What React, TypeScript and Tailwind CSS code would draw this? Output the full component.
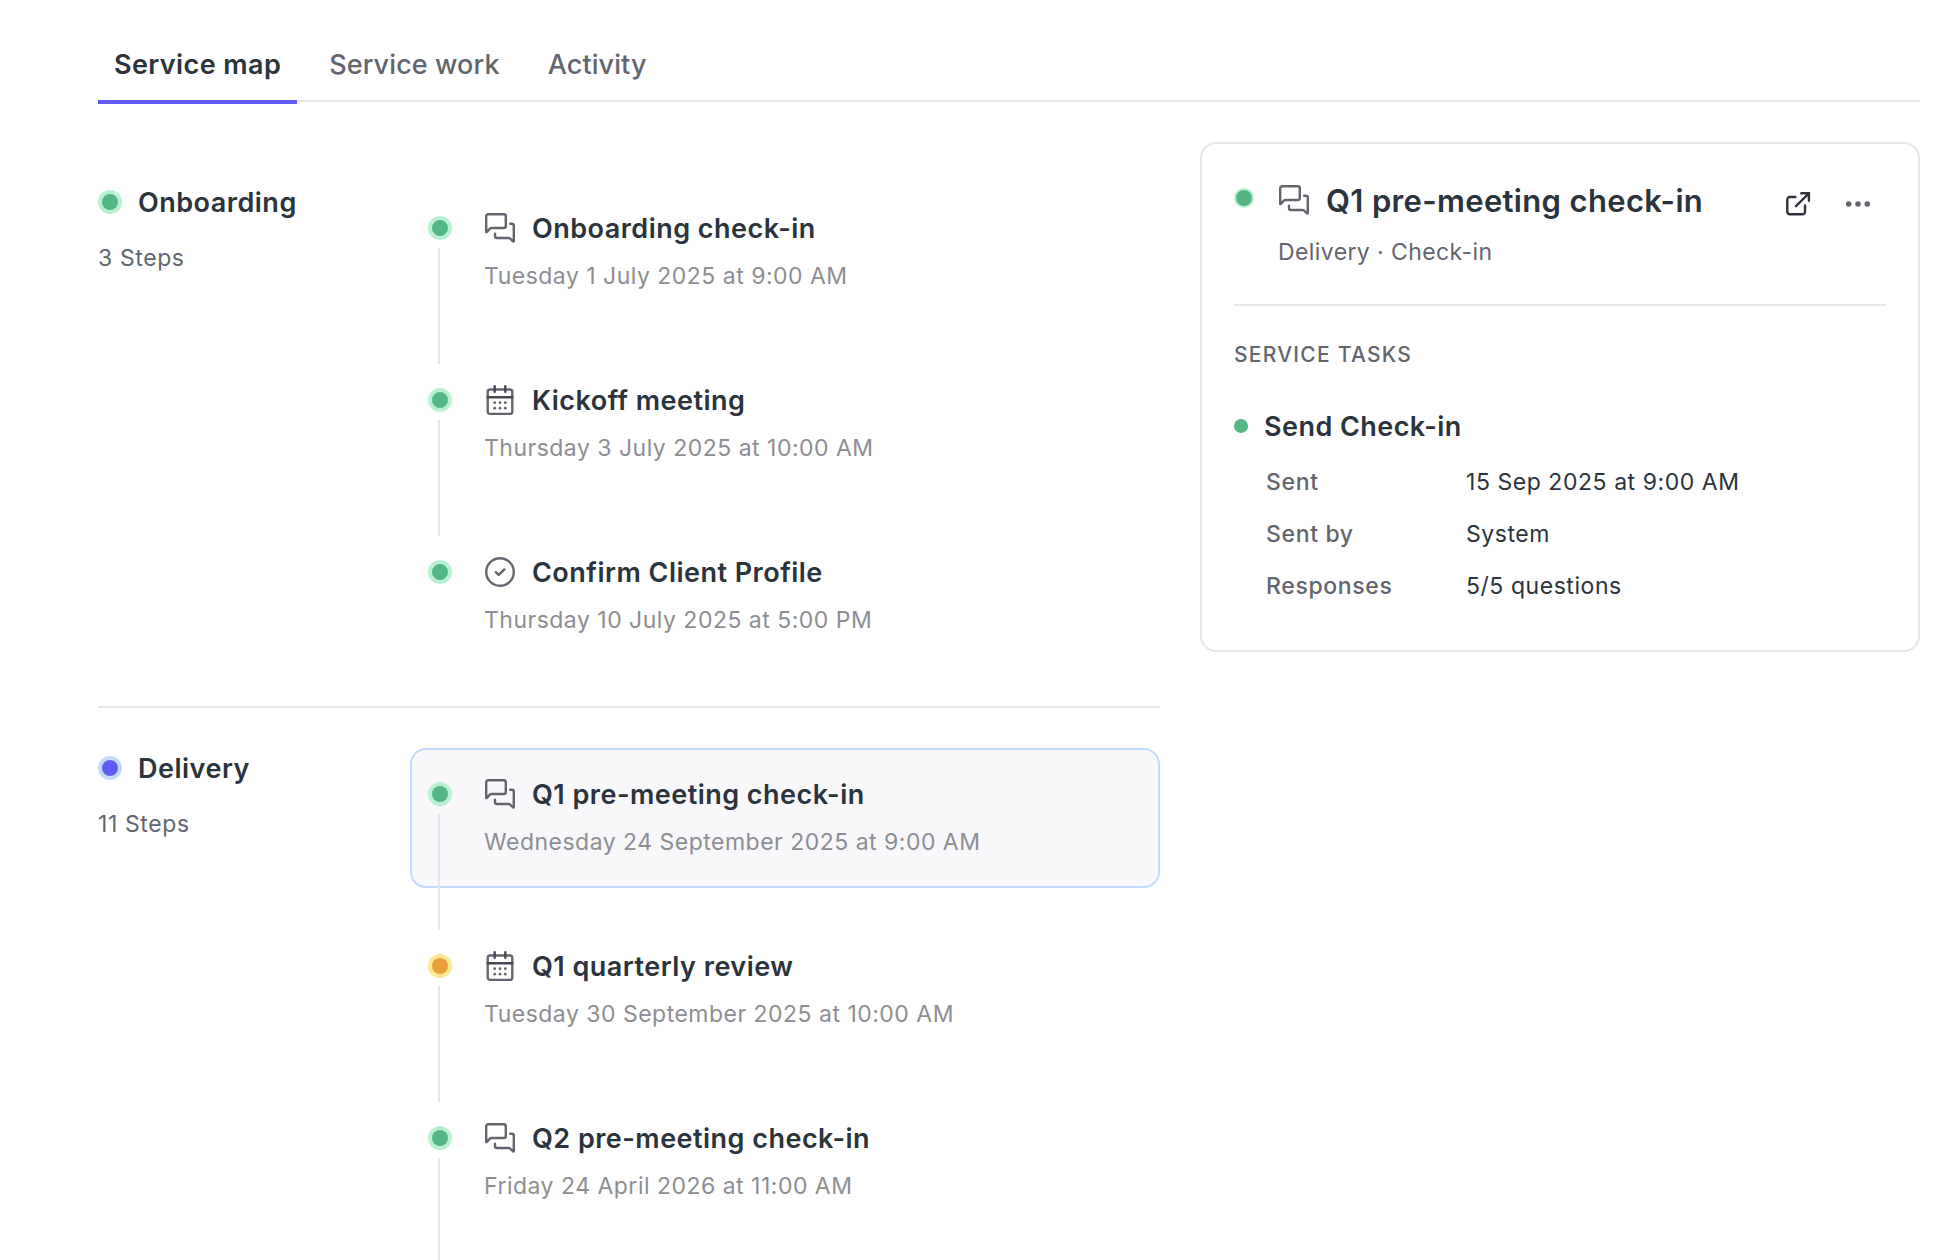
import React from 'react';

type Status = 'done' | 'active' | 'pending';
type StepKind = 'checkin' | 'meeting' | 'task';

interface Step {
  title: string;
  date: string;
  kind: StepKind;
  status: Status;
  selected?: boolean;
}

interface Phase {
  name: string;
  total: number;
  status: Status;
  steps: Step[];
}

const tabs = ['Service map', 'Service work', 'Activity'];

const phases: Phase[] = [
  {
    name: 'Onboarding',
    total: 3,
    status: 'done',
    steps: [
      { title: 'Onboarding check-in', date: 'Tuesday 1 July 2025 at 9:00 AM', kind: 'checkin', status: 'done' },
      { title: 'Kickoff meeting', date: 'Thursday 3 July 2025 at 10:00 AM', kind: 'meeting', status: 'done' },
      { title: 'Confirm Client Profile', date: 'Thursday 10 July 2025 at 5:00 PM', kind: 'task', status: 'done' },
    ],
  },
  {
    name: 'Delivery',
    total: 11,
    status: 'active',
    steps: [
      { title: 'Q1 pre-meeting check-in', date: 'Wednesday 24 September 2025 at 9:00 AM', kind: 'checkin', status: 'done', selected: true },
      { title: 'Q1 quarterly review', date: 'Tuesday 30 September 2025 at 10:00 AM', kind: 'meeting', status: 'pending' },
      { title: 'Q2 pre-meeting check-in', date: 'Friday 24 April 2026 at 11:00 AM', kind: 'checkin', status: 'done' },
    ],
  },
];

const details = [
  { label: 'Sent', value: '15 Sep 2025 at 9:00 AM' },
  { label: 'Sent by', value: 'System' },
  { label: 'Responses', value: '5/5 questions' },
];

const dotColors: Record<Status, string> = {
  done: 'bg-[#54b585] border-[#b8f0d2]',
  active: 'bg-[#625bf6] border-[#c3dafe]',
  pending: 'bg-[#e8a03a] border-[#fbe694]',
};

const StatusDot: React.FC<{ status: Status }> = ({ status }) => (
  <span className={`block size-6 shrink-0 rounded-full border-4 ${dotColors[status]}`} />
);

const ChatIcon: React.FC = () => (
  <svg viewBox="0 0 32 32" className="size-8 shrink-0 text-[#62656e]" fill="none" stroke="currentColor" strokeWidth="2.4" strokeLinecap="round" strokeLinejoin="round">
    <path d="M2.200 19.800V4.200a2 2 0 0 1 2-2h15.600a2 2 0 0 1 2 2v9.800a2 2 0 0 1-2 2H7.600q-1 0-1.700.700L2.900 19.800q-.7.600-.7 0Z" />
    <path d="M26.200 11.800h1.600a2 2 0 0 1 2 2v15.300q0 .9-.7.300l-3.300-3.100Q25.200 26 24.400 26H13a2 2 0 0 1-2-2v-2.200" />
  </svg>
);

const CalendarIcon: React.FC = () => (
  <svg viewBox="0 0 32 32" className="size-8 shrink-0 text-[#62656e]" fill="none" stroke="currentColor" strokeWidth="2.4" strokeLinecap="round" strokeLinejoin="round">
    <rect x="3.700" y="5.500" width="24.600" height="24.400" rx="2.500" />
    <path d="M3.700 13.300h24.600M10.700 2.200v5.600M21.300 2.200v5.600" className="text-[#454853]" stroke="currentColor" />
    <g fill="currentColor" stroke="none">
      <circle cx="10.700" cy="18.700" r="1.400" />
      <circle cx="16" cy="18.700" r="1.400" />
      <circle cx="21.300" cy="18.700" r="1.400" />
      <circle cx="10.700" cy="24.200" r="1.400" />
      <circle cx="16" cy="24.200" r="1.400" />
      <circle cx="21.300" cy="24.200" r="1.400" />
    </g>
  </svg>
);

const CheckIcon: React.FC = () => (
  <svg viewBox="0 0 32 32" className="size-8 shrink-0 text-[#62656e]" fill="none" stroke="currentColor" strokeWidth="2.4" strokeLinecap="round" strokeLinejoin="round">
    <circle cx="16" cy="16" r="13.800" />
    <path d="M11.800 16.200 14.700 18.900 20.400 13.400" />
  </svg>
);

const OpenIcon: React.FC = () => (
  <svg viewBox="0 0 28 28" className="size-7 text-[#2f343e]" fill="none" stroke="currentColor" strokeWidth="2.400" strokeLinecap="round" strokeLinejoin="miter">
    <path d="M11.400 7H5.800a2.500 2.500 0 0 0-2.500 2.500v12.300a2.500 2.500 0 0 0 2.500 2.500h12.700a2.500 2.500 0 0 0 2.500-2.500v-6.300" />
    <path d="M17.300 3.300h7.600v7.400M24.700 3.500 12 16.200" />
  </svg>
);

const MoreIcon: React.FC = () => (
  <svg viewBox="0 0 28 28" className="size-7 text-[#62656e]" fill="currentColor">
    <circle cx="4.700" cy="14" r="2.800" />
    <circle cx="14" cy="14" r="2.800" />
    <circle cx="23.300" cy="14" r="2.800" />
  </svg>
);

const StepIcon: React.FC<{ kind: StepKind }> = ({ kind }) => {
  if (kind === 'meeting') return <CalendarIcon />;
  if (kind === 'task') return <CheckIcon />;
  return <ChatIcon />;
};

const StepRow: React.FC<{ step: Step; isLast: boolean }> = ({ step, isLast }) => (
  <div
    className={`relative flex h-[140px] rounded-2xl border-2 pt-[26px] pl-4 ${
      step.selected ? 'border-[#c3dafe] bg-[#f8f8fb]' : 'border-transparent'
    }`}
  >
    <div className="pt-1.5">
      <StatusDot status={step.status} />
    </div>
    {/* connector down to the next step */}
    {!isLast && <span className="absolute top-16 left-[26px] h-[116px] w-0.5 bg-[#e5e5eb]" />}
    <div className="ml-8">
      <div className="flex h-9 items-center gap-4">
        <StepIcon kind={step.kind} />
        <h3 className="mt-0.5 text-[27px] leading-9 font-semibold tracking-[0.48px] whitespace-nowrap text-[#2b333c]">{step.title}</h3>
      </div>
      <p className="mt-[14px] text-[23px] leading-8 tracking-[0.49px] whitespace-nowrap text-[#8c8e94]">{step.date}</p>
    </div>
  </div>
);

const PhaseSection: React.FC<{ phase: Phase }> = ({ phase }) => (
  <section className="flex border-b-2 border-[#e5e5eb] py-10">
    <div className="w-[312px] shrink-0">
      <div className="flex h-10 items-center gap-4">
        <StatusDot status={phase.status} />
        <h2 className="mt-0.5 text-[27px] font-semibold tracking-[0.5px] text-[#2b333c]">{phase.name}</h2>
      </div>
      <p className="mt-5 text-[23px] leading-8 tracking-[0.6px] text-[#62656e]">{phase.total} Steps</p>
    </div>
    <div className="flex grow flex-col gap-8">
      {phase.steps.map((step, i) => (
        <StepRow key={step.title} step={step} isLast={i === phase.total - 1} />
      ))}
    </div>
  </section>
);

const DetailCard: React.FC = () => (
  <aside className="h-[510px] w-[720px] shrink-0 rounded-2xl border-2 border-[#e5e5eb] px-8">
    <div className="flex h-[162px] border-b-2 border-[#e5e5eb] pt-10">
      <span className="mt-1 size-5 rounded-full border-2 border-[#b8f0d2] bg-[#54b585]" />
      <div className="ml-6">
        <div className="flex h-8 items-center gap-4">
          <ChatIcon />
          <h2 className="mt-0.5 text-[31px] leading-10 font-semibold tracking-[0.34px] whitespace-nowrap text-[#2b333c]">Q1 pre-meeting check-in</h2>
        </div>
        <p className="mt-5 text-[23px] leading-8 tracking-[0.4px] text-[#62656e]">Delivery · Check-in</p>
      </div>
      <div className="mt-1.5 mr-3.5 ml-auto flex gap-8">
        <button aria-label="Open" className="size-7"><OpenIcon /></button>
        <button aria-label="More" className="size-7"><MoreIcon /></button>
      </div>
    </div>
    <h4 className="mt-[33px] text-[21px] leading-8 font-medium tracking-[1.25px] text-[#62656e] uppercase">Service tasks</h4>
    <div className="mt-[37px] flex h-9 items-center gap-4">
      <span className="size-3.5 rounded-full bg-[#54b585]" />
      <h3 className="mt-0.5 text-[27px] leading-9 font-semibold tracking-[0.45px] text-[#2b333c]">Send Check-in</h3>
    </div>
    <dl className="mt-[22px] grid grid-cols-[200px_1fr] gap-y-5 pl-8 text-[23px] leading-8">
      {details.map((d) => (
        <React.Fragment key={d.label}>
          <dt className="font-medium tracking-[0.65px] text-[#62656e]">{d.label}</dt>
          <dd className="tracking-[0.55px] text-[#2b333c]">{d.value}</dd>
        </React.Fragment>
      ))}
    </dl>
  </aside>
);

export default function App() {
  return (
    <div className="h-[1260px] w-[1960px] overflow-hidden bg-white pr-10 pl-[98px] font-['Inter',sans-serif]">
      <nav className="flex h-[102px] items-end gap-4 border-b-2 border-[#e5e5eb]">
        {tabs.map((tab, i) => (
          <button
            key={tab}
            className={`-mb-1 h-[62px] border-b-4 px-4 pb-3 text-[27px] leading-10 ${
              i === 0
                ? 'border-[#625bf6] font-semibold tracking-[0.4px] text-[#2b333c]'
                : 'border-transparent font-medium tracking-[0.1px] text-[#62656e]'
            }`}
          >
            {tab}
          </button>
        ))}
      </nav>
      <div className="flex items-start gap-10">
        <main className="w-[1062px] shrink-0 pt-10">
          {phases.map((phase) => (
            <PhaseSection key={phase.name} phase={phase} />
          ))}
        </main>
        <div className="pt-10">
          <DetailCard />
        </div>
      </div>
    </div>
  );
}
